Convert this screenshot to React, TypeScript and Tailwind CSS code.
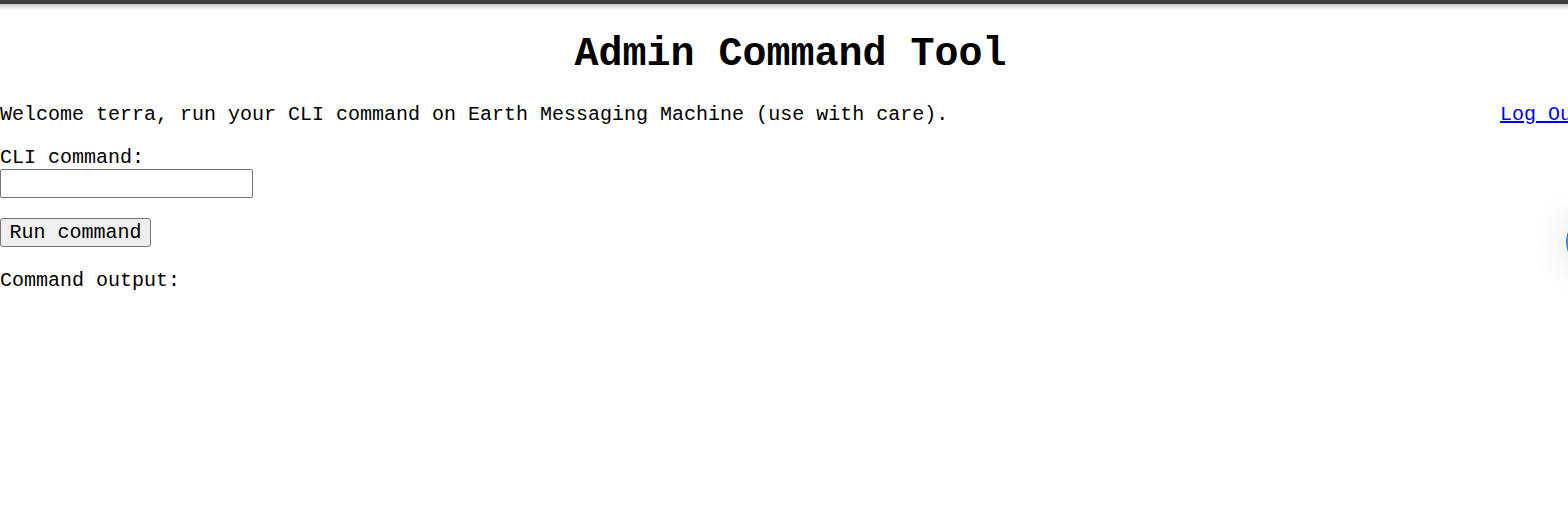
import { useState } from "react";

const mono = "font-['Liberation_Mono','Courier_New',monospace]";

const App = () => {
  const [cmd, setCmd] = useState("");

  return (
    <div className={`relative h-[512px] w-[1568px] overflow-hidden bg-white text-black ${mono}`}>
      {/* top bar */}
      <div className="h-[4px] bg-[#3c3c3c]" />
      <div className="h-[6px] bg-gradient-to-b from-[#c8c8c8] to-white" />

      <h1 className="mt-[22px] pl-[13px] text-center text-[40px] font-bold leading-[45px]">Admin Command Tool</h1>

      {/* welcome row */}
      <div className="mt-[26px] flex w-[1584px] justify-between text-[20px] leading-[23px]">
        <span>Welcome terra, run your CLI command on Earth Messaging Machine (use with care).</span>
        <a href="#" className="text-[#0000ee] underline">Log Out</a>
      </div>

      <form className="flex flex-col items-start" onSubmit={(e) => e.preventDefault()}>
        <label className="mt-[20px] text-[20px] leading-[23px]">CLI command:</label>
        <input
          value={cmd}
          onChange={(e) => setCmd(e.target.value)}
          className="h-[29px] w-[253px] rounded-[2px] border border-[#767676] px-[2px] text-[20px] outline-none"
        />
        <button
          type="submit"
          className="mt-[20px] h-[29px] w-[151px] rounded-[3px] border border-[#767676] bg-[#efefef] text-[20px] leading-[23px] text-black"
        >
          Run command
        </button>
      </form>

      <div className="mt-[22px] text-[20px] leading-[23px]">Command output:</div>

      {/* floating widget peeking from the right */}
      <div className="absolute left-[1566px] top-[214px] h-[56px] w-[56px] rounded-full bg-[#3b82f6] shadow-[0_0_40px_rgba(0,0,0,0.12)]" />
    </div>
  );
};

export default App;
